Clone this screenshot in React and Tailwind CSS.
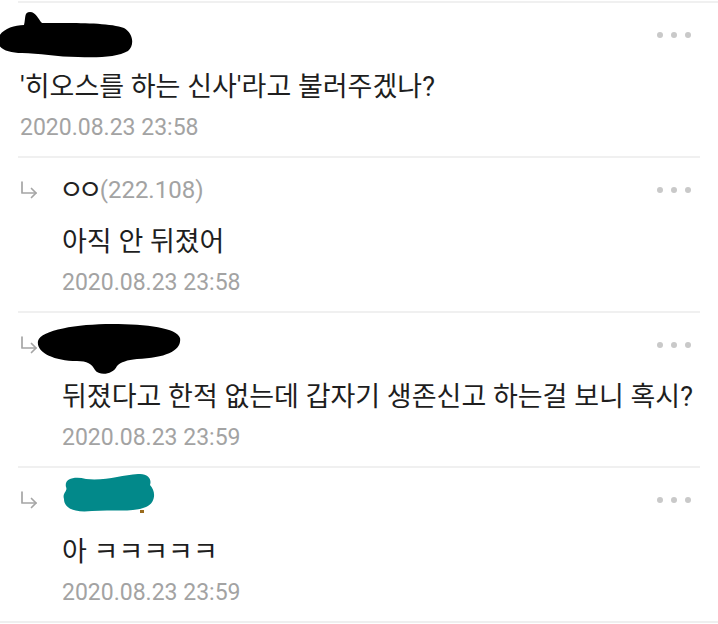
import React from 'react';

// 답글 화살표 (↳)
function ReplyArrow() {
  return (
    <svg width="18" height="18" viewBox="0 0 18 18" fill="none" stroke="#a5a5a5" strokeWidth="1.7" strokeLinecap="round" strokeLinejoin="round">
      <path d="M2 1 V12 H16" />
      <path d="M11.5 7.5 L16 12 L11.5 16.5" />
    </svg>
  );
}

function Dots() {
  return (
    <div className="flex items-center gap-2">
      <span className="w-1.5 h-1.5 rounded-full bg-[#c9c9c9]" />
      <span className="w-1.5 h-1.5 rounded-full bg-[#c9c9c9]" />
      <span className="w-1.5 h-1.5 rounded-full bg-[#c9c9c9]" />
    </div>
  );
}

// 가려진 닉네임 (낙서)
function BlackScribble() {
  return (
    <svg width="137" height="48" viewBox="0 0 137 48" className="-ml-[20px]">
      <path
        fill="#000"
        d="M0,30 C0,20 14,14 26,14 C28,6 26,1 32,1 C38,1 40,8 44,12 C70,12 110,11 126,17 C135,22 137,34 130,40 C120,46 100,47 80,46 C60,46 40,42 24,42 C10,42 0,38 0,30 Z"
      />
    </svg>
  );
}

function BlackScribble2() {
  return (
    <svg width="145" height="52" viewBox="0 0 145 52" className="-ml-[25px] mt-[10px]">
      <path
        fill="#000"
        d="M1,17 C4,6 40,0 75,0 C110,0 140,4 143,14 C145,26 130,34 100,35 C90,36 84,38 80,42 C76,51 62,52 58,46 C55,40 50,37 40,37 C16,37 -1,28 1,17 Z"
      />
    </svg>
  );
}

function TealScribble() {
  return (
    <svg width="94" height="42" viewBox="0 0 94 42" className="mb-[12px]">
      <path
        fill="#02898a"
        d="M4,14 C2,6 12,3 24,6 C44,8 60,2 76,1 C86,0 90,6 88,12 C94,18 94,30 84,34 C70,40 50,36 30,38 C14,40 2,36 2,26 C0,20 6,18 4,14 Z"
      />
      <rect x="78" y="37" width="4" height="3" fill="#9a6b1c" />
    </svg>
  );
}

function Comment({ reply, name, content, time }) {
  return (
    <div className="h-[153px] pt-3 pl-[18px] pr-[27px] flex flex-col">
      <div className="h-10 flex items-center justify-between">
        <div className="flex items-center">
          {reply && (
            <div className="w-[44px] pl-[2px] flex items-center">
              <ReplyArrow />
            </div>
          )}
          {name}
        </div>
        <Dots />
      </div>
      <div className={`mt-3 h-10 flex items-center text-[27px] text-[#1e1e1e] whitespace-nowrap ${reply ? 'pl-[44px]' : 'pl-[2px]'}`}>
        {content}
      </div>
      <div className={`mt-[5px] h-8 flex items-center text-[23px] text-[#a3a3a3] ${reply ? 'pl-[44px]' : 'pl-[2px]'}`}>
        {time}
      </div>
    </div>
  );
}

function Divider() {
  return <div className="mx-[18px] h-0.5 bg-[#f0f0f0]" />;
}

export default function App() {
  return (
    <div className="w-[718px] h-[624px] bg-white overflow-hidden pt-px font-[Roboto,'Noto_Sans_CJK_KR',sans-serif]">
      <div className="ml-[18px] h-0.5 bg-[#f0f0f0]" />
      <Comment
        name={<BlackScribble />}
        content="'히오스를 하는 신사'라고 불러주겠나?"
        time="2020.08.23 23:58"
      />
      <Divider />
      <Comment
        reply
        name={
          <span className="flex items-center leading-none">
            <span className="text-[27px] text-[#222] tracking-[-6px] -ml-[3px]">ㅇㅇ</span>
            <span className="text-[24px] text-[#a3a3a3] ml-[3px]">(222.108)</span>
          </span>
        }
        content="아직 안 뒤졌어"
        time="2020.08.23 23:58"
      />
      <Divider />
      <Comment
        reply
        name={<BlackScribble2 />}
        content="뒤졌다고 한적 없는데 갑자기 생존신고 하는걸 보니 혹시?"
        time="2020.08.23 23:59"
      />
      <Divider />
      <Comment
        reply
        name={<TealScribble />}
        content="아 ㅋㅋㅋㅋㅋ"
        time="2020.08.23 23:59"
      />
      <div className="h-0.5 bg-[#efefef]" />
    </div>
  );
}
